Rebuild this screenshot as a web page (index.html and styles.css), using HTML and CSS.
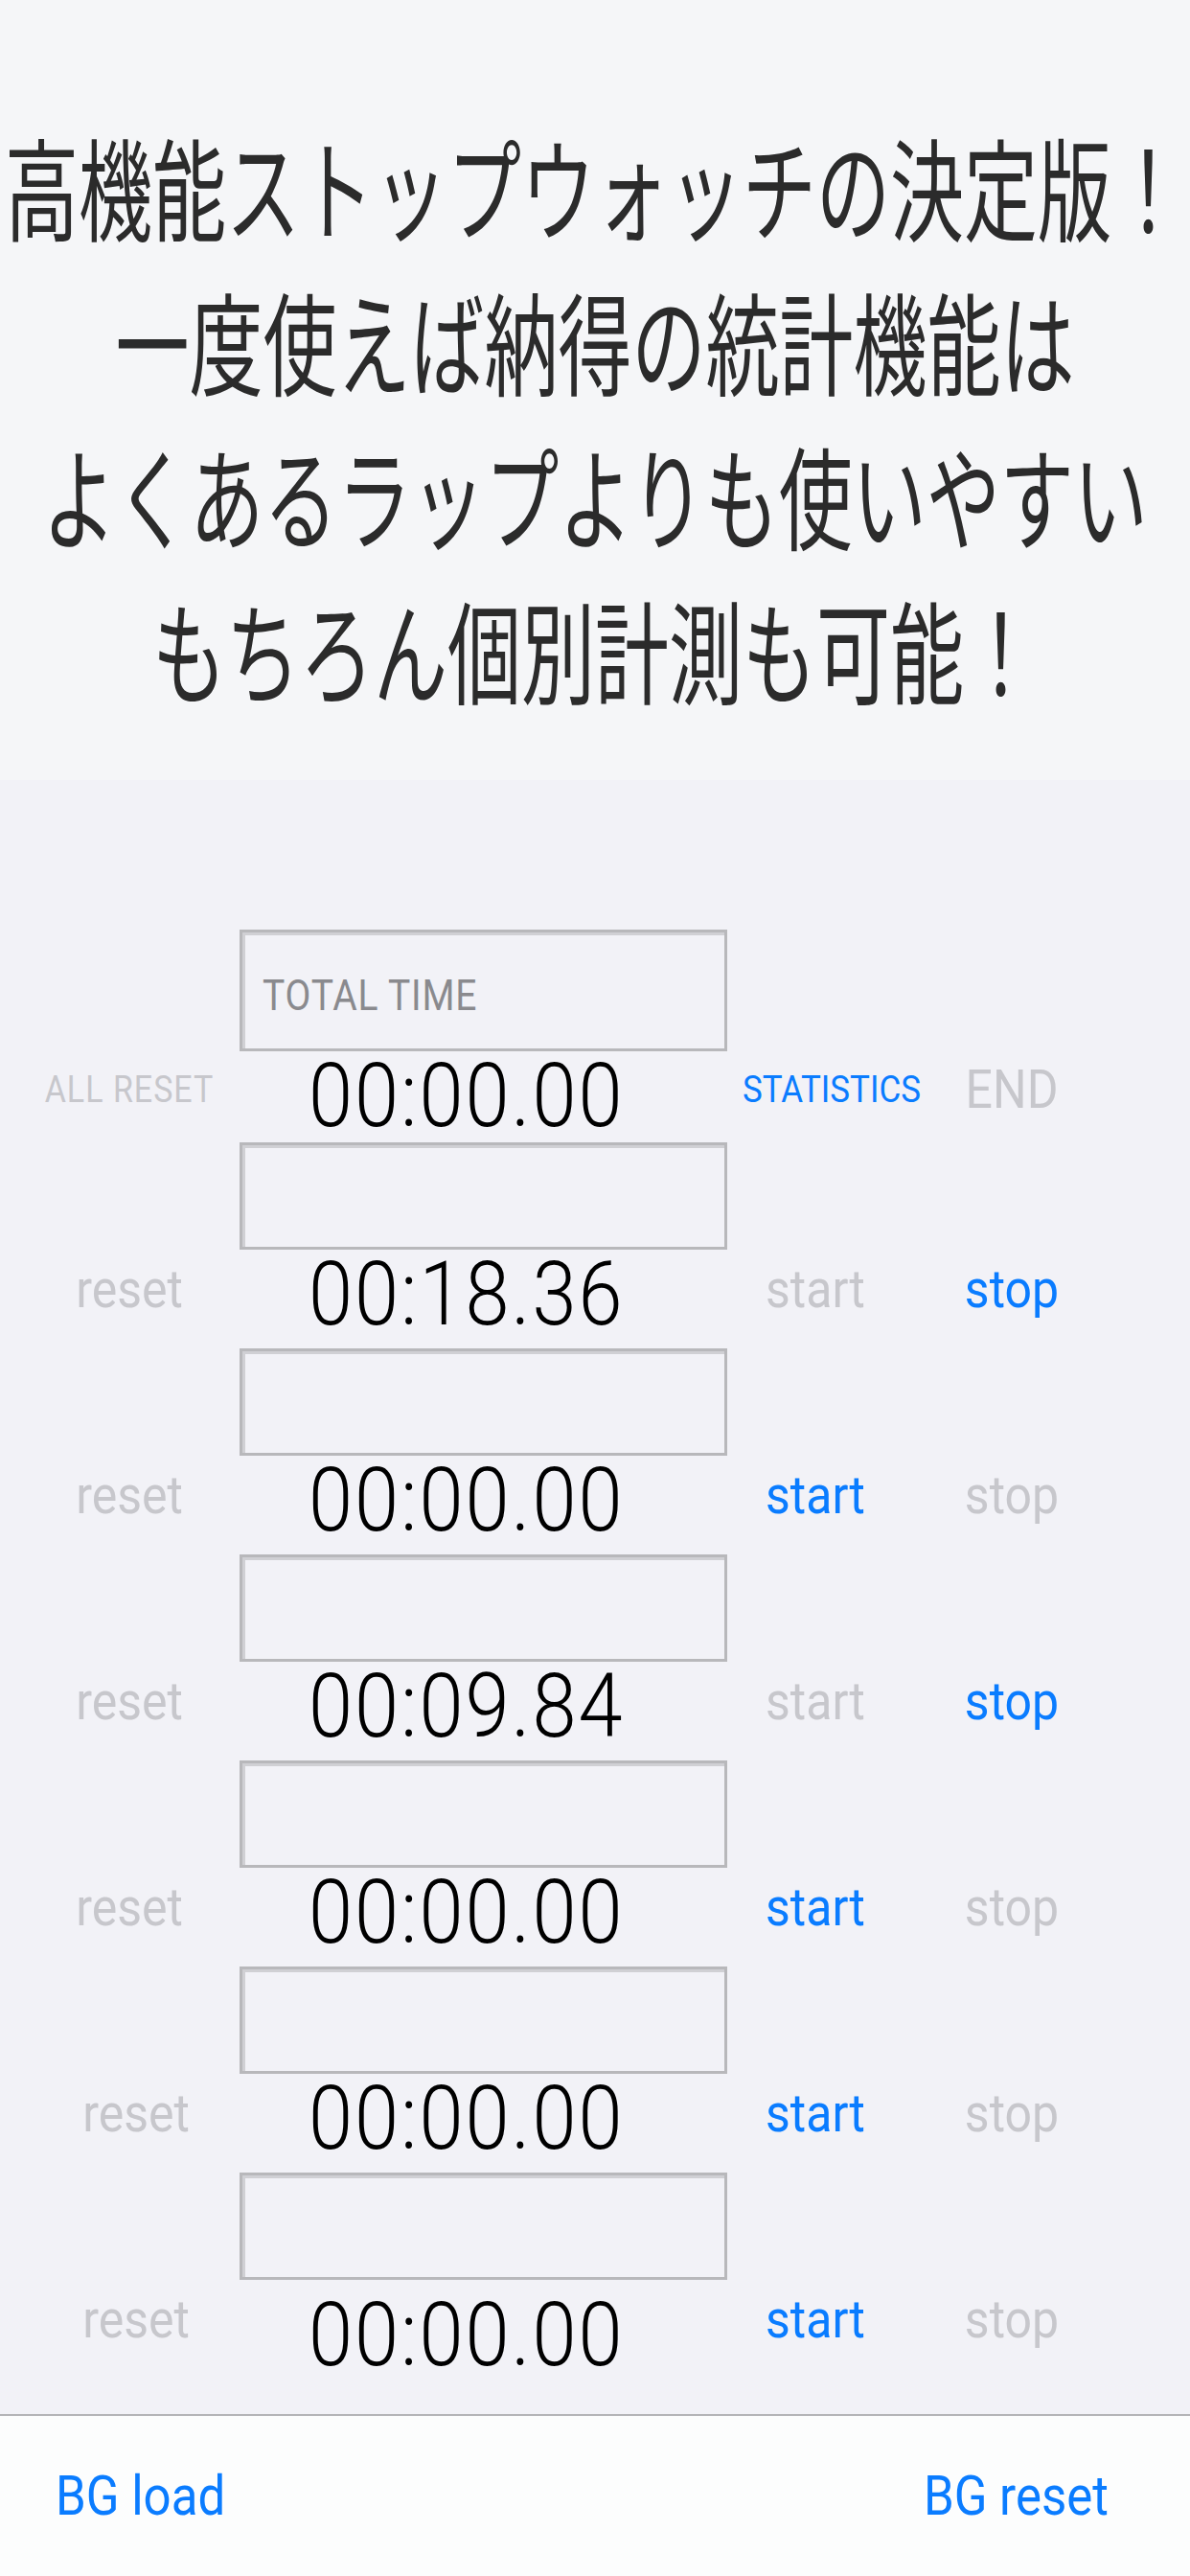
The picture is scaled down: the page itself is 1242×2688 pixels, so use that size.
FILE: index.html
```html
<!DOCTYPE html>
<html lang="ja">
<head>
<meta charset="utf-8">
<title>Stopwatch</title>
<link rel="stylesheet" href="styles.css">
</head>
<body>
<div class="screen">
  <header class="promo">
    <p class="promo-line">高機能ストップウォッチの決定版！</p>
    <p class="promo-line">一度使えば納得の統計機能は</p>
    <p class="promo-line">よくあるラップよりも使いやすい</p>
    <p class="promo-line">もちろん個別計測も可能！</p>
  </header>

  <main class="timers">
    <section class="timer timer-total">
      <div class="field field-total"><span class="s placeholder">TOTAL TIME</span></div>
      <div class="controls">
        <div class="cell cell-left cell-caps"><span class="s caps muted">ALL RESET</span></div>
        <div class="time"><span class="s">00:00.00</span></div>
        <div class="cell cell-caps cell-stat"><span class="s caps active">STATISTICS</span></div>
        <div class="cell cell-end"><span class="s label muted">END</span></div>
      </div>
    </section>

    <section class="timer">
      <div class="field"></div>
      <div class="controls">
        <div class="cell cell-left"><span class="s label muted">reset</span></div>
        <div class="time"><span class="s">00:18.36</span></div>
        <div class="cell"><span class="s label muted">start</span></div>
        <div class="cell"><span class="s label active">stop</span></div>
      </div>
    </section>

    <section class="timer">
      <div class="field"></div>
      <div class="controls">
        <div class="cell cell-left"><span class="s label muted">reset</span></div>
        <div class="time"><span class="s">00:00.00</span></div>
        <div class="cell"><span class="s label active">start</span></div>
        <div class="cell"><span class="s label muted">stop</span></div>
      </div>
    </section>

    <section class="timer">
      <div class="field"></div>
      <div class="controls">
        <div class="cell cell-left"><span class="s label muted">reset</span></div>
        <div class="time"><span class="s">00:09.84</span></div>
        <div class="cell"><span class="s label muted">start</span></div>
        <div class="cell"><span class="s label active">stop</span></div>
      </div>
    </section>

    <section class="timer">
      <div class="field"></div>
      <div class="controls">
        <div class="cell cell-left"><span class="s label muted">reset</span></div>
        <div class="time"><span class="s">00:00.00</span></div>
        <div class="cell"><span class="s label active">start</span></div>
        <div class="cell"><span class="s label muted">stop</span></div>
      </div>
    </section>

    <section class="timer">
      <div class="field"></div>
      <div class="controls">
        <div class="cell cell-left cell-shift"><span class="s label muted">reset</span></div>
        <div class="time"><span class="s">00:00.00</span></div>
        <div class="cell"><span class="s label active">start</span></div>
        <div class="cell"><span class="s label muted">stop</span></div>
      </div>
    </section>

    <section class="timer timer-last">
      <div class="field"></div>
      <div class="controls">
        <div class="cell cell-left cell-shift"><span class="s label muted">reset</span></div>
        <div class="time time-low"><span class="s">00:00.00</span></div>
        <div class="cell"><span class="s label active">start</span></div>
        <div class="cell"><span class="s label muted">stop</span></div>
      </div>
    </section>
  </main>

  <footer class="toolbar">
    <span class="s tool">BG load</span>
    <span class="s tool">BG reset</span>
  </footer>
</div>
</body>
</html>
```

FILE: styles.css
```css
html, body {
  margin: 0;
  padding: 0;
}

body {
  width: 1242px;
  height: 2688px;
  overflow: hidden;
  background: #f2f2f7;
  font-family: Roboto, "Liberation Sans", sans-serif;
  color: #000;
}

.screen {
  display: flex;
  flex-direction: column;
  height: 2688px;
}

/* promo header */
.promo {
  flex: none;
  height: 814px;
  box-sizing: border-box;
  padding-top: 112px;
  background: #f5f6f8;
}

.promo-line {
  margin: 0;
  height: 161px;
  font-family: "Noto Sans CJK JP", sans-serif;
  font-size: 77px;
  line-height: 161px;
  text-align: center;
  white-space: nowrap;
  color: #2b2b2b;
  transform: scaleY(1.5);
}

/* vertically stretched text */
.s {
  display: inline-block;
  white-space: nowrap;
  transform: scaleY(1.12);
  transform-origin: 50% 0;
}

/* timers */
.timers {
  flex: 1;
  padding-top: 156px;
}

.field {
  margin-left: 250px;
  width: 509px;
  height: 112px;
  box-sizing: border-box;
  border: 3px solid #b8b8bb;
  box-shadow: inset 3px 3px 0 #d0d0d4;
  background: #f2f2f7;
}

.field-total {
  height: 127px;
  display: flex;
  align-items: center;
  padding: 8px 0 0 21px;
}

.placeholder {
  font-size: 39px;
  line-height: 39px;
  letter-spacing: 0.8px;
  color: #8a8a8e;
}

.controls {
  display: grid;
  grid-template-columns: 250px 509px 184px 226px;
  align-items: start;
  height: 103px;
}

.timer-total .controls {
  height: 95px;
}

.cell {
  display: flex;
  justify-content: center;
  padding-top: 14px;
}

.cell-left {
  padding-left: 20px;
}

.cell-shift {
  padding-left: 34px;
}

.cell-caps {
  padding-top: 21px;
}

.cell-stat {
  padding-left: 34px;
}

.cell-end {
  padding-top: 13px;
}

.label {
  font-size: 50px;
  line-height: 48px;
}

.caps {
  font-size: 34px;
  line-height: 34px;
  letter-spacing: 1px;
}

.cell-stat .caps {
  font-size: 35px;
  line-height: 35px;
  letter-spacing: 0;
}

.muted {
  color: #c7c7cc;
}

.active {
  color: #0a7cff;
}

.time {
  padding-left: 72px;
  font-size: 83px;
  line-height: 83px;
  font-weight: 300;
  letter-spacing: 2px;
  color: #000;
}

.time-low {
  padding-top: 11px;
}

/* bottom toolbar */
.toolbar {
  flex: none;
  height: 169px;
  box-sizing: border-box;
  border-top: 2px solid #b4b4b7;
  background: #fcfdfd;
  display: flex;
  justify-content: space-between;
  align-items: center;
  padding: 0 85px 6px 58px;
}

.tool {
  font-size: 51px;
  line-height: 50px;
  color: #0a7cff;
}
```
